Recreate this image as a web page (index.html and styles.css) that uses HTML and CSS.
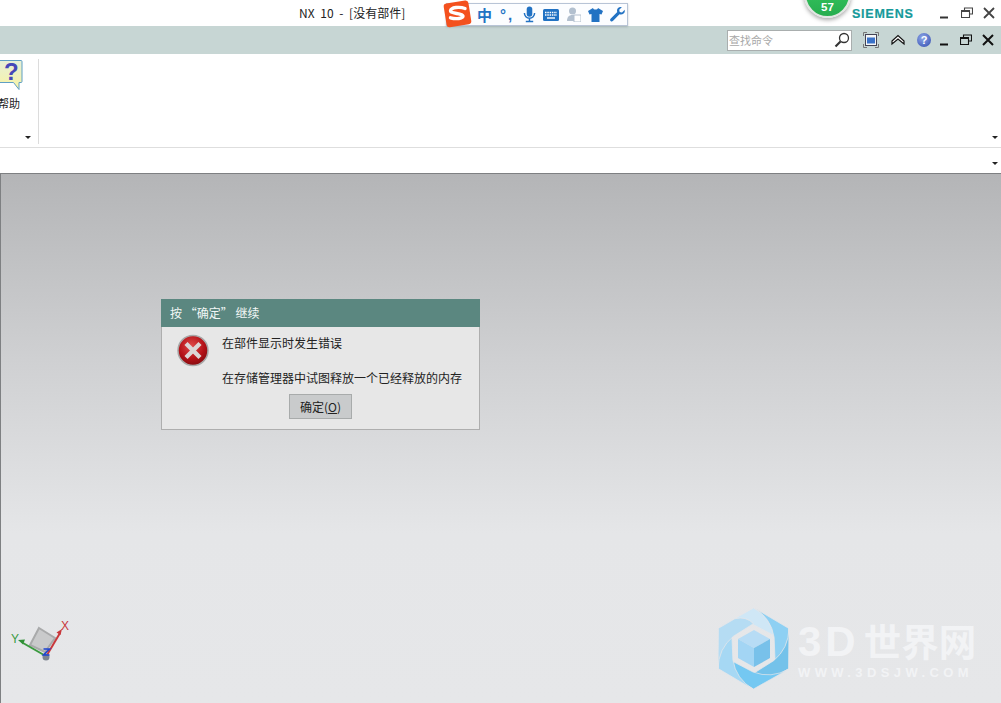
FILE: index.html
```html
<!DOCTYPE html>
<html lang="zh">
<head>
<meta charset="utf-8">
<title>NX 10</title>
<link rel="stylesheet" href="styles.css">
</head>
<body>
<div class="app">
  <header class="titlebar">
    <span class="title">NX 10 - [没有部件]</span>
    <span class="siemens">SIEMENS</span>
    <div class="winbtns">
      <svg width="12" height="12" viewBox="0 0 12 12"><path d="M1 10.500h8" stroke="#333" stroke-width="2"/></svg>
      <svg width="12" height="12" viewBox="0 0 12 12"><path d="M3.500 3V1h8v6h-3M.5 3.500h8v7H.5z" fill="none" stroke="#444" stroke-width="1.100"/><path d="M.5 4h8" stroke="#444" stroke-width="2"/></svg>
      <svg width="12" height="12" viewBox="0 0 12 12"><path d="M1 1l10 10M11 1L1 11" stroke="#444" stroke-width="1.800"/></svg>
    </div>
  </header>
  <div class="cmdbar">
    <div class="search">
      <span class="search-ph">查找命令</span>
      <svg width="16" height="16" viewBox="0 0 16 16"><circle cx="10" cy="6" r="4.500" fill="#fff" stroke="#333" stroke-width="1.300"/><path d="M6.500 9.500L1.500 14.500" stroke="#333" stroke-width="2.200"/></svg>
    </div>
    <svg class="ic-fit" width="16" height="16" viewBox="0 0 16 16"><path d="M.5 4V.5h3.500M12 .5h3.500V4M15.500 12v3.500H12M4 15.500H.5V12" fill="none" stroke="#777"/><rect x="2.500" y="2.500" width="11" height="11" fill="#f4f6f8" stroke="#445"/><rect x="4" y="5.500" width="8" height="6" fill="#3a72c8"/></svg>
    <svg class="ic-up" width="14" height="12" viewBox="0 0 14 12"><path d="M1 7L7 1.500 13 7v3L7 5 1 10z" fill="#fff" stroke="#111" stroke-width="1.200"/></svg>
    <span class="help-ball">?</span>
    <div class="winbtns inner">
      <svg width="12" height="12" viewBox="0 0 12 12"><path d="M2 10.500h8" stroke="#111" stroke-width="2"/></svg>
      <svg width="12" height="12" viewBox="0 0 12 12"><path d="M3.500 3V1h8v6h-3M.5 3.500h8v7H.5z" fill="none" stroke="#111" stroke-width="1.100"/><path d="M.5 4h8" stroke="#111" stroke-width="2"/></svg>
      <svg width="12" height="12" viewBox="0 0 12 12"><path d="M1 1l10 10M11 1L1 11" stroke="#111" stroke-width="2"/></svg>
    </div>
  </div>
  <section class="ribbon">
    <div class="group">
      <svg class="help-big" width="24" height="32" viewBox="0 0 24 32"><defs><linearGradient id="hg" x1="0" y1="0" x2="0" y2="1"><stop offset="0" stop-color="#e6f0d8"/><stop offset="1" stop-color="#f8f3a4"/></linearGradient></defs><path d="M-4 1.500h25a1 1 0 0 1 1 1v20a1 1 0 0 1-1 1h-2v7l-5.500-7H-4z" fill="url(#hg)" stroke="#5f9fc4"/><text x="4" y="21" class="q">?</text></svg>
      <span class="group-label">帮助</span>
      <i class="caret group-caret"></i>
    </div>
    <i class="caret ribbon-caret"></i>
  </section>
  <div class="subbar"><i class="caret"></i></div>
  <main class="viewport"></main>
</div>

<div class="ime">
  <svg class="ime-logo" width="32" height="28" viewBox="0 0 32 28"><rect x="3" y="2" width="25" height="24" rx="3" fill="#f4511e" transform="rotate(-9 15 14)"/><path d="M23 8.500C18 6.500 9 7 8.500 11c-.3 3 12 2 12.500 5 .3 2.500-7 3.500-12.500 1.800" fill="none" stroke="#fff" stroke-width="3.400" stroke-linecap="round"/></svg>
  <span class="ime-zh">中</span>
  <span class="ime-pt">°,</span>
  <svg width="13" height="17" viewBox="0 0 14 17"><rect x="4" y="0" width="6" height="11" rx="3" fill="#2272c3"/><path d="M1.500 7a5.500 5.500 0 0 0 11 0M7 12.500V16M3 16h8" fill="none" stroke="#2272c3" stroke-width="1.600"/></svg>
  <svg width="16" height="12" viewBox="0 0 16 12"><rect width="16" height="12" rx="1.500" fill="#2272c3"/><path d="M2 3.500h12M2 6h12" stroke="#fff" stroke-width="1.400" stroke-dasharray="1.500 .8"/><path d="M4 9h8" stroke="#fff" stroke-width="1.400"/></svg>
  <svg class="ime-person" width="14" height="15" viewBox="0 0 14 15"><circle cx="5.500" cy="4" r="3.500" fill="#b3c0cf"/><path d="M0 14c0-4 2-6 5.500-6S11 10 11 14z" fill="#b3c0cf"/><rect x="7" y="8" width="7" height="7" fill="#fff" stroke="#b3c0cf"/></svg>
  <svg width="15" height="14" viewBox="0 0 15 14"><path d="M5 0L0 3l1.500 3.500L3.500 6v8h8V6l2 .5L15 3l-5-3c-.5 2-4.500 2-5 0z" fill="#2272c3"/></svg>
  <svg width="15" height="15" viewBox="0 0 15 15"><path d="M14.500 3l-2.500 2.500-2.300-.4-.5-2.300L11.800.3C9.500-.5 7 1 7 3.700c0 .6.100 1 .3 1.400L.8 11.500c-1 1-.9 1.800-.2 2.500s1.500.8 2.500-.2l6.400-6.500c3 1 6.400-1.400 5-4.800z" fill="#2272c3"/></svg>
</div>

<div class="badge"><span>57</span></div>

<div class="dialog">
  <div class="dialog-title">按 “确定” 继续</div>
  <div class="dialog-body">
    <svg class="err" width="32" height="33" viewBox="0 0 32 33">
      <defs><radialGradient id="rg" cx="45%" cy="35%" r="70%"><stop offset="0" stop-color="#e04a4a"/><stop offset=".6" stop-color="#b41218"/><stop offset="1" stop-color="#7d0a0e"/></radialGradient></defs>
      <circle cx="16" cy="16.500" r="15" fill="url(#rg)" stroke="#a8a8a8" stroke-width="1.500"/>
      <path d="M9 9.500l14 14M23 9.500l-14 14" stroke="#dcd6d6" stroke-width="4.400"/>
    </svg>
    <div class="msg">
      <p>在部件显示时发生错误</p>
      <p>在存储管理器中试图释放一个已经释放的内存</p>
    </div>
  </div>
  <div class="dialog-actions"><button class="ok">确定(<u>O</u>)</button></div>
</div>

<svg class="triad" width="70" height="60" viewBox="0 0 70 60">
  <path d="M39 18L55 28 45 42 30 35z" fill="#c9cacb" stroke="#a9aaab" stroke-width="2"/>
  <path d="M47 45L60 23" stroke="#c8383c" stroke-width="2"/><path d="M62 19l-5.500 3.500 4 2.500z" fill="#c8383c"/>
  <path d="M44 45L23 33" stroke="#3a9a3f" stroke-width="2"/><path d="M18 30l7-.5-2 5z" fill="#2f8f36"/>
  <circle cx="46" cy="47" r="3.500" fill="#7d8590"/>
  <path d="M43.500 39h6l-6 6h6" fill="none" stroke="#1e44d0" stroke-width="1.600"/>
  <text x="11" y="33" class="tx green">Y</text>
  <text x="61" y="20" class="tx red">X</text>
</svg>

<div class="watermark">
  <svg width="72" height="82" viewBox="0 0 72 82">
    <g stroke="#e6e7e9" stroke-width=".7">
      <path fill="#cfe7f6" d="M0 20L35.500 0L52 9.500Q60 18 57 28L36 17Q18 10 0 20Z"/>
      <path fill="#8ed0f3" transform="rotate(60 35.500 40.500)" d="M0 20L35.500 0L52 9.500Q60 18 57 28L36 17Q18 10 0 20Z"/>
      <path fill="#74c2ea" transform="rotate(120 35.500 40.500)" d="M0 20L35.500 0L52 9.500Q60 18 57 28L36 17Q18 10 0 20Z"/>
      <path fill="#74c8f2" transform="rotate(180 35.500 40.500)" d="M0 20L35.500 0L52 9.500Q60 18 57 28L36 17Q18 10 0 20Z"/>
      <path fill="#a6d8f4" transform="rotate(240 35.500 40.500)" d="M0 20L35.500 0L52 9.500Q60 18 57 28L36 17Q18 10 0 20Z"/>
      <path fill="#b5dcf3" transform="rotate(300 35.500 40.500)" d="M0 20L35.500 0L52 9.500Q60 18 57 28L36 17Q18 10 0 20Z"/>
    </g>
    <path d="M36 22L52 31 36 40 20 31z" fill="#b7dcf5"/>
    <path d="M20 31L36 40V59L20 50z" fill="#a3d5f4"/>
    <path d="M52 31L36 40V59L52 50z" fill="#78c1ea"/>
  </svg>
  <div class="wm-text">
    <span class="wm-big"><span class="wm-3d">3D</span>世界网</span>
    <span class="wm-url">WWW.3DSJW.COM</span>
  </div>
</div>
</body>
</html>
```
FILE: styles.css
```css
* { box-sizing: border-box; }
html, body { margin: 0; padding: 0; height: 100%; overflow: hidden; }
body { font-family: "Noto Sans CJK SC", "Liberation Sans", sans-serif; font-size: 12px; color: #222; background: #fff; }
.app { display: flex; flex-direction: column; height: 703px; width: 1001px; }

.titlebar { height: 26px; flex: none; background: #fff; display: flex; align-items: center; position: relative; }
.title { position: absolute; left: 299px; top: 4px; line-height: 17px; font-size: 12px; color: #222; word-spacing: 3px; }
.siemens { position: absolute; left: 852px; top: 6px; font: bold 12.500px/16px "Liberation Sans", sans-serif; letter-spacing: .75px; color: #169a9a; -webkit-text-stroke: .2px #169a9a; }
.winbtns { margin-left: auto; display: flex; align-items: center; gap: 10px; padding-right: 6px; }

.cmdbar { height: 28px; flex: none; background: #c7d6d4; display: flex; align-items: center; padding-left: 727px; }
.cmdbar > * { flex: none; }
.search { width: 125px; height: 21px; background: #fff; border: 1px solid #a9aeae; display: flex; align-items: center; justify-content: space-between; padding: 0 1px 0 1px; }
.search-ph { font-size: 11px; color: #a8a8a8; line-height: 14px; }
.ic-fit { margin-left: 11px; }
.ic-up { margin-left: 12px; }
.help-ball { margin-left: 12px; width: 14px; height: 14px; border-radius: 50%; background: radial-gradient(circle at 40% 35%, #8fa8e8, #2f49ae); color: #fff; font: bold 11px/14px "Liberation Sans", sans-serif; text-align: center; }
.winbtns.inner { margin-left: 7px; gap: 10px; padding-right: 7px; }

.ribbon { height: 94px; flex: none; background: #fff; border-bottom: 1px solid #dedede; position: relative; display: flex; }
.group { width: 39px; height: 85px; margin-top: 5px; border-right: 1px solid #dcdcdc; display: flex; flex-direction: column; position: relative; }
.help-big { display: block; }
.q { font: bold 24px "Liberation Sans", sans-serif; fill: #4648b8; }
.group-label { position: absolute; left: -2px; top: 36px; font-size: 11px; line-height: 16px; color: #222; white-space: nowrap; }
.caret { display: block; width: 0; height: 0; border-left: 3px solid transparent; border-right: 3px solid transparent; border-top: 3px solid #222; }
.group-caret { position: absolute; left: 25px; top: 77px; }
.ribbon-caret { position: absolute; right: 3px; top: 82px; }

.subbar { height: 25px; flex: none; background: #fff; display: flex; align-items: center; justify-content: flex-end; padding: 6px 3px 0 0; }

.viewport { flex: 1; border-top: 1px solid #7e8082; border-left: 1px solid #7e8082; background: linear-gradient(#b4b5b7 0%, #cfd0d2 35%, #e5e6e8 68%, #e6e7e9 100%); }

.ime { position: absolute; left: 446px; top: 3px; width: 182px; height: 23px; background: #fcfdff; border: 1px solid #b8c4d6; box-shadow: 0 1px 2px rgba(90,110,120,.35); display: flex; align-items: center; gap: 7px; padding-left: 30px; }
.ime-logo { position: absolute; left: -5px; top: -4px; }
.ime-zh { font-weight: bold; font-size: 15px; line-height: 18px; color: #2272c3; }
.ime-pt { font: bold 15px/16px "Liberation Sans", sans-serif; color: #2272c3; width: 16px; letter-spacing: 2px; margin-left: 1px; }
.ime-person { margin-left: 1px; }

.badge { position: absolute; left: 804px; top: -29px; width: 47px; height: 47px; border-radius: 50%; background: linear-gradient(#3ccf66, #27ad4e); border: 2px solid #e2e6e2; box-shadow: 0 2px 4px rgba(0,0,0,.35); display: flex; align-items: flex-end; justify-content: center; }
.badge span { font: bold 11.500px/14px "Liberation Sans", sans-serif; color: #fff; margin-bottom: 2px; }

.dialog { position: absolute; left: 161px; top: 299px; width: 319px; height: 131px; background: #e7e7e7; border: 1px solid #aeaeae; display: flex; flex-direction: column; }
.dialog-title { height: 28px; flex: none; margin: -1px -1px 0; background: #5b8780; color: #f2f7f6; font-size: 12px; line-height: 28px; padding-left: 9px; }
.dialog-body { display: flex; height: 67px; padding: 7px 0 0 15px; }
.err { flex: none; }
.msg { margin-left: 13px; }
.msg p { margin: 0 0 18px; font-size: 12px; line-height: 17px; color: #222; white-space: nowrap; }
.dialog-actions { display: flex; justify-content: center; }
.ok { width: 63px; height: 25px; padding: 0; background: #c9cbcc; border: 1px solid #a8abab; font: 12px/21px "Noto Sans CJK SC", sans-serif; color: #222; }

.triad { position: absolute; left: 0; top: 610px; }
.tx { font: 12px "Liberation Sans", sans-serif; }
.green { fill: #3a9a3f; }
.red { fill: #c8383c; }

.watermark { position: absolute; left: 718px; top: 608px; display: flex; gap: 8px; }
.watermark svg { display: block; }
.wm-text { display: flex; flex-direction: column; padding-top: 10px; }
.wm-big { font: bold 37.500px/44px "Noto Sans CJK SC", sans-serif; color: #f2f3f5; white-space: nowrap; }
.wm-3d { font: bold 42px/44px "Liberation Sans", sans-serif; letter-spacing: 4px; margin-right: 4px; }
.wm-url { font: bold 13px/14px "Liberation Sans", sans-serif; color: #f2f3f5; letter-spacing: 4.400px; margin-top: 2px; white-space: nowrap; }
```
